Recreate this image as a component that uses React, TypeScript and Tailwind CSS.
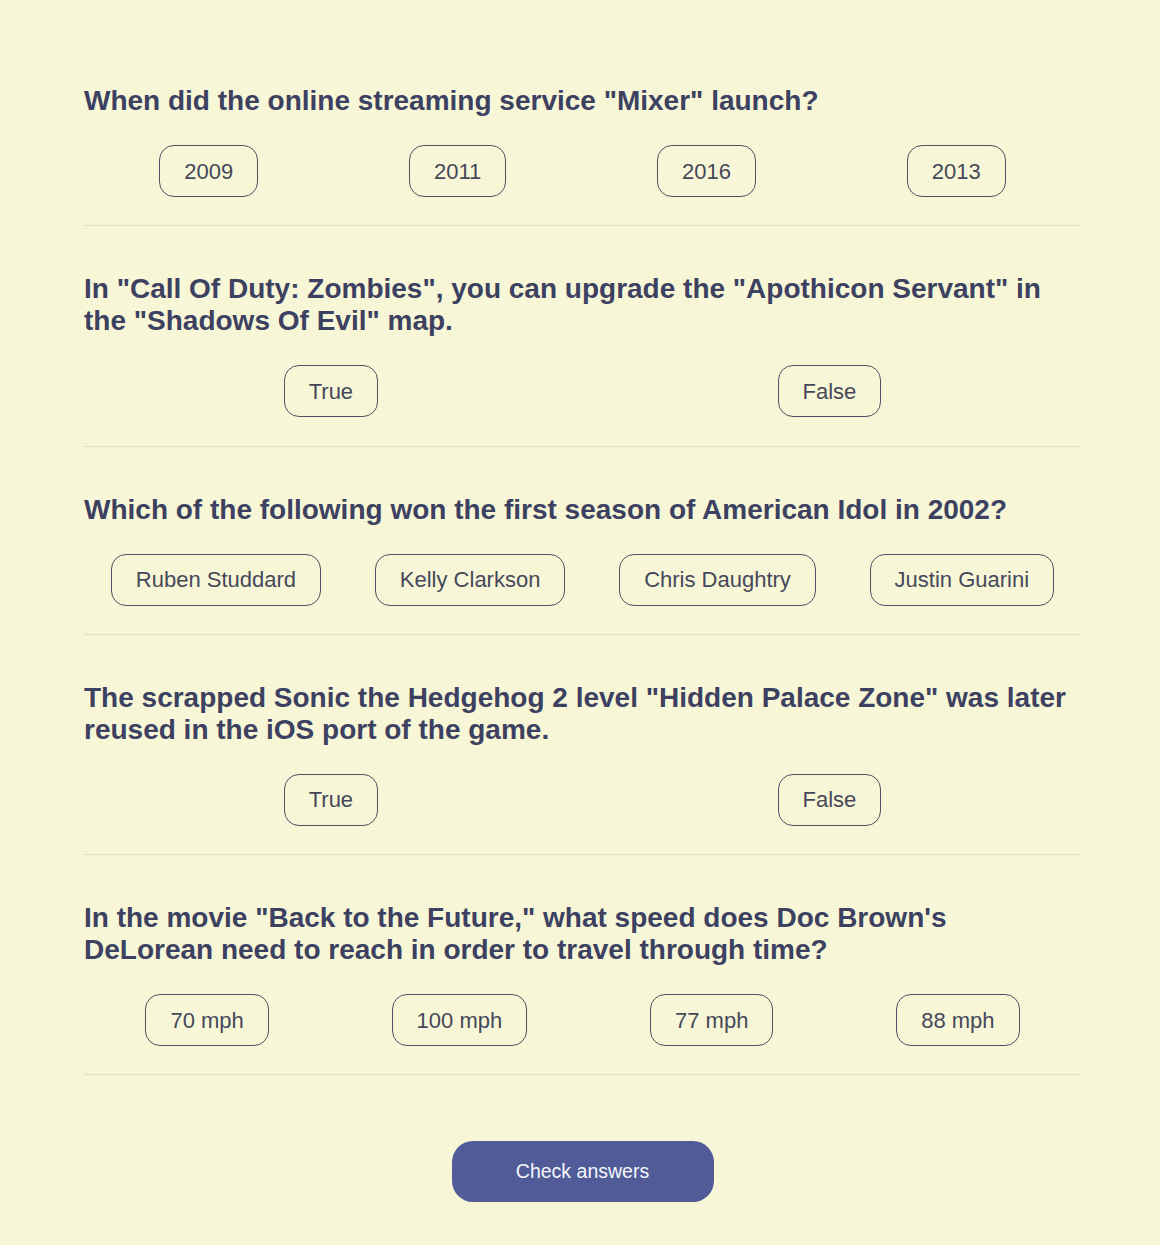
const questions = [
  {
    question: 'When did the online streaming service "Mixer" launch?',
    answers: ["2009", "2011", "2016", "2013"],
  },
  {
    question:
      'In "Call Of Duty: Zombies", you can upgrade the "Apothicon Servant" in the "Shadows Of Evil" map.',
    answers: ["True", "False"],
  },
  {
    question: "Which of the following won the first season of American Idol in 2002?",
    answers: ["Ruben Studdard", "Kelly Clarkson", "Chris Daughtry", "Justin Guarini"],
  },
  {
    question:
      'The scrapped Sonic the Hedgehog 2 level "Hidden Palace Zone" was later reused in the iOS port of the game.',
    answers: ["True", "False"],
  },
  {
    question:
      'In the movie "Back to the Future," what speed does Doc Brown\'s DeLorean need to reach in order to travel through time?',
    answers: ["70 mph", "100 mph", "77 mph", "88 mph"],
  },
];

export default function App() {
  return (
    <div
      className="min-h-[1245px] w-full bg-[#f7f7d7] pt-[38px] pb-[43px]"
      style={{ fontFamily: '"Liberation Sans", Arial, sans-serif' }}
    >
      <div className="ml-[84px] w-[997px]">
        {questions.map((q, i) => (
          <div key={i} className="border-b border-[#dfdfcd] pt-[47px] pb-[28.25px]">
            {/* 问题 */}
            <h2 className="text-[28px] font-bold leading-[32px] text-[#3d4161]">
              {q.question}
            </h2>
            {/* 选项 */}
            <div className="mt-[28px] flex justify-around">
              {q.answers.map((a) => (
                <button
                  key={a}
                  className="h-[52px] rounded-[15px] border border-[#4e5063] px-[24px] text-[22px] leading-[25px] text-[#46485a]"
                >
                  {a}
                </button>
              ))}
            </div>
          </div>
        ))}

        <div className="mt-[66px] flex justify-center">
          <button className="h-[61px] w-[262px] rounded-[21px] bg-[#505b98] text-[19.5px] text-[#f5f7fb]">
            Check answers
          </button>
        </div>
      </div>
    </div>
  );
}
